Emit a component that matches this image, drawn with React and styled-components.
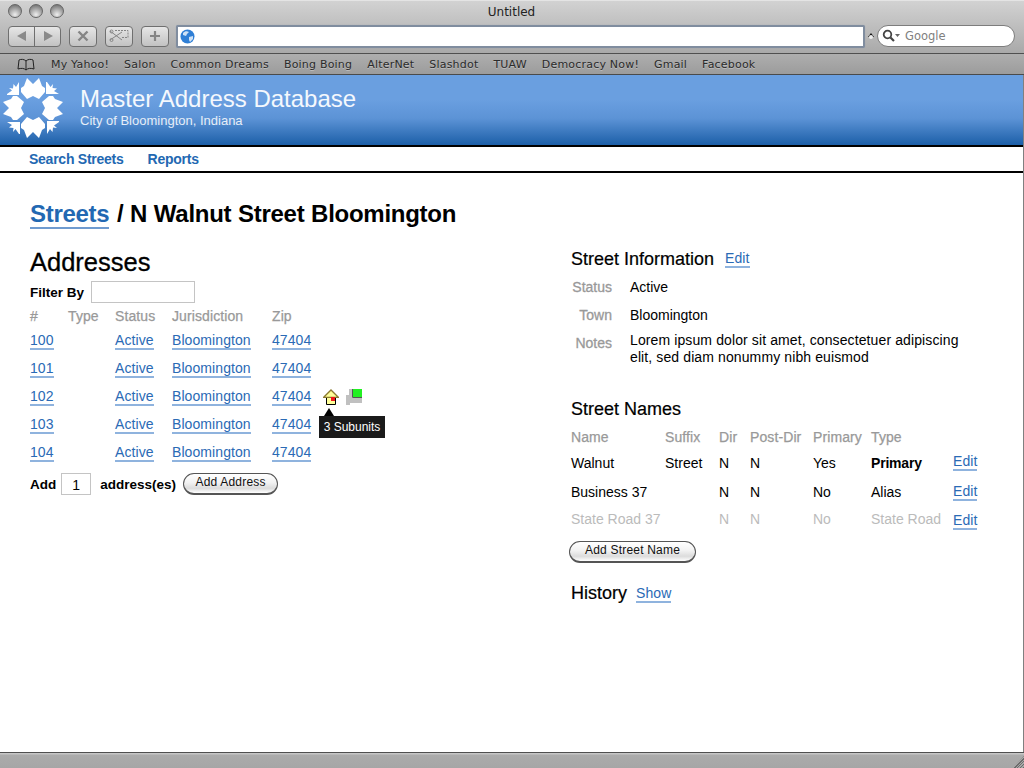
import React from 'react'
import styled, { createGlobalStyle } from 'styled-components'

const Global = createGlobalStyle`
html, body { margin: 0; padding: 0; background: #fff; }
body { font-family: "Liberation Sans", Arial, sans-serif; font-size: 14px; color: #000; }
* { box-sizing: border-box; }
`

const Page = styled.div`
width: 1024px;
height: 768px;
display: flex;
flex-direction: column;
overflow: hidden;
`

const Toolbar = styled.div`
height: 54px;
flex: none;
background: linear-gradient(#d2d2d2, #a9a9a9);
border-top: 1px solid #e4e4e4;
border-bottom: 1px solid #4f4f4f;
padding: 3px 9px 0 8px;
display: flex;
flex-direction: column;
`

const TitleRow = styled.div`
height: 17px;
padding-bottom: 2px;
display: flex;
align-items: center;
position: relative;
justify-content: center;
font-family: "DejaVu Sans", sans-serif;
font-size: 12px;
color: #222;
`

const Lights = styled.div`
position: absolute;
left: 0;
top: 0;
display: flex;
gap: 7px;
`

const Light = styled.span`
width: 14px;
height: 14px;
border-radius: 50%;
border: 1px solid #666;
background: radial-gradient(circle at 50% 80%, #eeeeee 0, #a8a8a8 50%, #707070 90%);
`

const Controls = styled.div`
display: flex;
align-items: center;
margin-top: 3px;
height: 24px;
`

const NavGroup = styled.div`
display: flex;
width: ${p => p.$w}px;
height: 21px;
margin-right: ${p => p.$mr}px;
border: 1px solid #6f6f6f;
border-radius: 4px;
background: linear-gradient(#e6e6e6, #c2c2c2);
`

const NavButton = styled.div`
flex: 1;
display: flex;
align-items: center;
justify-content: center;
& + & { border-left: 1px solid #6f6f6f; }
`

const UrlField = styled.div`
width: 689px;
height: 23px;
background: #fff;
border: 2px solid #808d9f;
box-shadow: 0 0 1px #8d9bb0;
border-radius: 2px;
display: flex;
align-items: center;
padding-left: 2px;
`

const Caret = styled.div`
width: 12px;
display: flex;
justify-content: center;
`

const SearchField = styled.div`
width: 138px;
height: 22px;
border-radius: 11px;
background: #fff;
border: 1px solid #7d7d7d;
display: flex;
align-items: center;
padding-left: 4px;
gap: 3px;
font-family: "DejaVu Sans", sans-serif;
font-size: 11.5px;
color: #808080;
`

const BookmarkBar = styled.div`
height: 21px;
flex: none;
background: linear-gradient(#aeaeae, #9c9c9c);
border-bottom: 1px solid #4a4a4a;
display: flex;
align-items: center;
padding-left: 17px;
font-family: "DejaVu Sans", sans-serif;
font-size: 11px;
color: #2b2b2b;
text-shadow: 0 1px 0 #bdbdbd;
`

const BookIcon = styled.svg`
margin-right: 16px;
`

const Bookmark = styled.span`
margin-right: 15px;
letter-spacing: 0.2px;
`

const Viewport = styled.div`
flex: 1;
display: flex;
flex-direction: column;
border-right: 1px solid #808080;
`

const Masthead = styled.div`
height: 70px;
flex: none;
background: linear-gradient(#6a9fe0 0, #6a9fe0 35%, #5c93d6 62%, #1c5fa8 100%);
display: flex;
padding: 3px 0 0 3px;
color: #fff;
`

const Titles = styled.div`
margin-left: 17px;
padding-top: 7px;
`

const AppName = styled.div`
font-size: 24px;
line-height: 28px;
color: #f4f8fd;
`

const AppPlace = styled.div`
font-size: 13px;
line-height: 15px;
color: #e6eef8;
`

const MainNav = styled.div`
height: 28px;
flex: none;
border-top: 2px solid #000;
border-bottom: 2px solid #000;
display: flex;
align-items: center;
padding-left: 29px;
gap: 24px;
`

const NavLink = styled.a`
font-size: 14px;
font-weight: bold;
color: #2268b2;
letter-spacing: -0.25px;
`

const Content = styled.div`
flex: 1;
padding: 26px 30px 0 30px;
`

const Heading = styled.h1`
margin: 0;
font-size: 24px;
line-height: 30px;
font-weight: bold;
letter-spacing: -0.27px;
word-spacing: 0.3px;
`

const HeadingLink = styled.a`
color: #2268b2;
letter-spacing: -0.3px;
border-bottom: 2px solid #6f9bd0;
margin-right: 1px;
`

const Columns = styled.div`
display: grid;
grid-template-columns: 541px 1fr;
margin-top: 17px;
`

const SectionTitle = styled.h2`
margin: 0;
font-size: 25.5px;
line-height: 32px;
font-weight: normal;
-webkit-text-stroke: 0.3px #000;
`

const FilterRow = styled.div`
display: flex;
align-items: center;
height: 24px;
margin-top: 2px;
font-weight: bold;
font-size: 13.5px;
gap: 7px;
`

const TextBox = styled.div`
width: ${p => p.$w}px;
height: 22px;
margin: 0 ${p => p.$mr || 0}px 0 ${p => p.$ml || 0}px;
border: 1px solid #c4c4c4;
background: #fff;
font-size: 14px;
text-align: center;
line-height: 22px;
font-weight: normal;
`

const AddressHead = styled.div`
display: grid;
grid-template-columns: 38px 47px 57px 100px 51px;
height: 23px;
align-items: center;
`

const HeadCell = styled.span`
color: #999;
font-size: 14px;
letter-spacing: 0.1px;
-webkit-text-stroke: 0.25px #999;
`

const AddressRow = styled.div`
display: grid;
grid-template-columns: 38px 47px 57px 100px 51px auto;
height: 28px;
align-items: center;
position: relative;
`

const Link = styled.a`
color: #2a6ab5;
font-size: 14px;
letter-spacing: 0.08px;
border-bottom: 2px solid #8fb3de;
justify-self: start;
line-height: 15px;
`

const EditLink = styled(Link)`
margin-top: ${p => (p.$drop ? 2 : 0)}px;
`

const RowIcons = styled.div`
display: flex;
gap: 7px;
padding-top: 1px;
`

const Tip = styled.div`
position: absolute;
left: 289px;
top: 33px;
height: 22px;
width: 66px;
background: #1a1a1a;
color: #fff;
font-size: 12px;
line-height: 22px;
text-align: center;
z-index: 2;
&::before {
  content: '';
  position: absolute;
  left: 5px;
  top: -8px;
  border-left: 5px solid transparent;
  border-right: 5px solid transparent;
  border-bottom: 8px solid #000;
}
`

const AddRow = styled.div`
display: flex;
align-items: center;
font-weight: bold;
font-size: 13.5px;
margin-top: 5px;
height: 24px;
`

const PillButton = styled.div`
height: 22px;
width: ${p => p.$w}px;
margin: ${p => p.$mt || 0}px 0 0 ${p => p.$ml || 0}px;
border-radius: 11px;
border: 1px solid #555;
border-bottom-width: 2px;
background: linear-gradient(#fff 0, #f2f2f2 45%, #dcdcdc 75%, #fff 100%);
font-size: 12px;
letter-spacing: 0.2px;
font-weight: normal;
text-align: center;
line-height: 17px;
color: #111;
`

const RightColumn = styled.div`
padding-top: 1px;
`

const SubHead = styled.div`
display: flex;
align-items: center;
gap: 11px;
margin-top: ${p => p.$mt || 0}px;
`

const SubTitle = styled.h3`
margin: 0;
font-size: 18px;
line-height: 24px;
font-weight: normal;
-webkit-text-stroke: 0.2px #000;
`

const HistoryLink = styled(Link)`
margin: 2px 0 0 -2px;
`

const InfoRow = styled.div`
display: grid;
grid-template-columns: 41px 1fr;
column-gap: 18px;
margin-top: ${p => p.$mt}px;
line-height: 17px;
`

const InfoLabel = styled.span`
color: #999;
text-align: right;
-webkit-text-stroke: 0.3px #999;
padding-top: ${p => p.$drop || 0}px;
`

const NotesText = styled.span`
letter-spacing: 0.11px;
`

const nameColumns = '94px 54px 31px 63px 58px 82px 30px'

const NameHead = styled.div`
display: grid;
grid-template-columns: ${nameColumns};
height: 22px;
margin-top: 5px;
align-items: center;
`

const NameRow = styled.div`
display: grid;
grid-template-columns: ${nameColumns};
height: 29px;
align-items: center;
color: ${p => (p.$muted ? '#bbb' : '#000')};
`

const NameCell = styled.span`
padding-bottom: ${p => (p.$muted ? 3 : 0)}px;
`

const TypeCell = styled(NameCell)`
font-weight: ${p => (p.$bold ? 'bold' : 'normal')};
letter-spacing: ${p => (p.$bold ? '-0.2px' : '0')};
`

const StatusStrip = styled.div`
height: 16px;
flex: none;
border-top: 1px solid #4f4f4f;
background: linear-gradient(#c6c6c6 0, #c6c6c6 1px, #ababab 2px, #a6a6a6 100%);
display: flex;
justify-content: flex-end;
align-items: flex-end;
`

const Grip = styled.div`
width: 11px;
height: 12px;
background: repeating-linear-gradient(135deg, transparent 0 1px, #6c6c6c 1px 2px);
clip-path: polygon(100% 0, 100% 100%, 0 100%);
`

function Logo() {
  const arrow = '18,10 21,8 24,0 30,6 36,0 39,8 42,10 42,14 36,21 30,18 24,21 18,14'
  const corner = '16,17 16,4 13,9 10.5,6 10,10.5 6,10 9,12.5 4,16 4,17'
  return (
    <svg width="60" height="60" viewBox="0 0 60 60">
      {[0, 90, 180, 270].map(a => (
        <g key={a} transform={`rotate(${a} 30 30)`} fill="#fff">
          <polygon points={arrow} />
          <polygon points={corner} />
        </g>
      ))}
    </svg>
  )
}

function Globe() {
  return (
    <svg width="15" height="15" viewBox="0 0 15 15">
      <circle cx="7.5" cy="7.5" r="7" fill="#2f7fd6" />
      <path d="M3 4c2-2 4-2 6-1l-2 2-1 2-3-1zM9 8l4-1 0 3-3 3-1-2z" fill="#cfe2f6" />
    </svg>
  )
}

function House() {
  return (
    <svg width="16" height="17" viewBox="0 0 16 17">
      <path d="M3.5 8v7.5h9V8" fill="#ffff99" stroke="#000" />
      <path d="M.7 8.3 8 1l7.3 7.3z" fill="#ffff99" stroke="#8a7a30" strokeWidth="1.3" />
      <rect x="8" y="8" width="4" height="4" fill="#f01818" />
    </svg>
  )
}

function Subunit() {
  return (
    <svg width="16" height="16" viewBox="0 0 16 16">
      <path d="M3 0h3v9h10v5H4v2H0V6h3z" fill="#c0c0c0" />
      <path d="M6.5 0v8.5H16" fill="none" stroke="#555" />
      <rect x="7" y="0" width="9" height="8" fill="#22f022" />
    </svg>
  )
}

const addresses = ['100', '101', '102', '103', '104']

const names = [
  { name: 'Walnut', suffix: 'Street', primary: 'Yes', type: 'Primary', bold: true },
  { name: 'Business 37', suffix: '', primary: 'No', type: 'Alias', drop: true },
  { name: 'State Road 37', suffix: '', primary: 'No', type: 'State Road', muted: true, drop: true }
]

export default function App() {
  return (
    <Page>
      <Global />
      <Toolbar>
        <TitleRow>
          <Lights>
            <Light /><Light /><Light />
          </Lights>
          Untitled
        </TitleRow>
        <Controls>
          <NavGroup $w={53} $mr={8}>
            <NavButton>
              <svg width="10" height="10" viewBox="0 0 10 10"><path d="M9 0v10L0 5z" fill="#8a8a8a" /></svg>
            </NavButton>
            <NavButton>
              <svg width="10" height="10" viewBox="0 0 10 10"><path d="M1 0v10l9-5z" fill="#8a8a8a" /></svg>
            </NavButton>
          </NavGroup>
          <NavGroup $w={28} $mr={8}>
            <NavButton>
              <svg width="12" height="12" viewBox="0 0 12 12"><path d="M1.5 1.5l9 9M10.5 1.5l-9 9" stroke="#858585" strokeWidth="2.4" /></svg>
            </NavButton>
          </NavGroup>
          <NavGroup $w={28} $mr={8}>
            <NavButton>
              <svg width="20" height="14" viewBox="0 0 20 14" fill="none" stroke="#858585">
                <path d="M6 1.5h13v7h-6" strokeDasharray="2 1" />
                <path d="M1 2l12 9M1 11l12-8" />
                <circle cx="2.5" cy="2.5" r="1.5" />
                <circle cx="2.5" cy="11" r="1.5" />
              </svg>
            </NavButton>
          </NavGroup>
          <NavGroup $w={28} $mr={7}>
            <NavButton>
              <svg width="12" height="12" viewBox="0 0 12 12"><path d="M6 1v10M1 6h10" stroke="#858585" strokeWidth="2.2" /></svg>
            </NavButton>
          </NavGroup>
          <UrlField><Globe /></UrlField>
          <Caret>
            <svg width="6" height="6" viewBox="0 0 6 6"><path d="M3 0l3 4H0z" fill="#111" /><circle cx="3" cy="4" r="2" fill="#eee" /></svg>
          </Caret>
          <SearchField>
            <svg width="20" height="14" viewBox="0 0 20 14" fill="none">
              <circle cx="5.5" cy="5.5" r="3.8" stroke="#444" strokeWidth="1.8" />
              <path d="M8.5 8.5l3.5 3.5" stroke="#444" strokeWidth="2.2" />
              <path d="M13 5h5l-2.5 3z" fill="#666" />
            </svg>
            Google
          </SearchField>
        </Controls>
      </Toolbar>
      <BookmarkBar>
        <BookIcon width="18" height="13" viewBox="0 0 18 13" fill="none" stroke="#222">
          <path d="M9 3C7 1 4 1 2 2L1 11c3-1 6-1 8 1 2-2 5-2 8-1l-1-9c-2-1-5-1-7 1zM9 3v9" />
        </BookIcon>
        {['My Yahoo!', 'Salon', 'Common Dreams', 'Boing Boing', 'AlterNet', 'Slashdot', 'TUAW', 'Democracy Now!', 'Gmail', 'Facebook'].map(b => (
          <Bookmark key={b}>{b}</Bookmark>
        ))}
      </BookmarkBar>
      <Viewport>
        <Masthead>
          <Logo />
          <Titles>
            <AppName>Master Address Database</AppName>
            <AppPlace>City of Bloomington, Indiana</AppPlace>
          </Titles>
        </Masthead>
        <MainNav>
          <NavLink>Search Streets</NavLink>
          <NavLink>Reports</NavLink>
        </MainNav>
        <Content>
          <Heading><HeadingLink>Streets</HeadingLink> / N Walnut Street Bloomington</Heading>
          <Columns>
            <div>
              <SectionTitle>Addresses</SectionTitle>
              <FilterRow>Filter By <TextBox $w={104} /></FilterRow>
              <AddressHead>
                <HeadCell>#</HeadCell>
                <HeadCell>Type</HeadCell>
                <HeadCell>Status</HeadCell>
                <HeadCell>Jurisdiction</HeadCell>
                <HeadCell>Zip</HeadCell>
              </AddressHead>
              {addresses.map(num => (
                <AddressRow key={num}>
                  <Link>{num}</Link>
                  <span />
                  <Link>Active</Link>
                  <Link>Bloomington</Link>
                  <Link>47404</Link>
                  {num === '102' && (
                    <RowIcons>
                      <House />
                      <Subunit />
                    </RowIcons>
                  )}
                  {num === '102' && <Tip>3 Subunits</Tip>}
                </AddressRow>
              ))}
              <AddRow>
                Add
                <TextBox $w={30} $ml={5} $mr={9}>1</TextBox>
                address(es)
                <PillButton $w={95} $ml={7}>Add Address</PillButton>
              </AddRow>
            </div>
            <RightColumn>
              <SubHead>
                <SubTitle>Street Information</SubTitle>
                <Link>Edit</Link>
              </SubHead>
              <InfoRow $mt={8}><InfoLabel>Status</InfoLabel><span>Active</span></InfoRow>
              <InfoRow $mt={11}><InfoLabel>Town</InfoLabel><span>Bloomington</span></InfoRow>
              <InfoRow $mt={8}>
                <InfoLabel $drop={3}>Notes</InfoLabel>
                <NotesText>Lorem ipsum dolor sit amet, consectetuer adipiscing<br />elit, sed diam nonummy nibh euismod</NotesText>
              </InfoRow>
              <SubHead $mt={31}>
                <SubTitle>Street Names</SubTitle>
              </SubHead>
              <NameHead>
                <HeadCell>Name</HeadCell>
                <HeadCell>Suffix</HeadCell>
                <HeadCell>Dir</HeadCell>
                <HeadCell>Post-Dir</HeadCell>
                <HeadCell>Primary</HeadCell>
                <HeadCell>Type</HeadCell>
                <span />
              </NameHead>
              {names.map(n => (
                <NameRow key={n.name} $muted={n.muted}>
                  <NameCell $muted={n.muted}>{n.name}</NameCell>
                  <NameCell $muted={n.muted}>{n.suffix}</NameCell>
                  <NameCell $muted={n.muted}>N</NameCell>
                  <NameCell $muted={n.muted}>N</NameCell>
                  <NameCell $muted={n.muted}>{n.primary}</NameCell>
                  <TypeCell $muted={n.muted} $bold={n.bold}>{n.type}</TypeCell>
                  <EditLink $drop={n.drop}>Edit</EditLink>
                </NameRow>
              ))}
              <PillButton $w={127} $mt={6} $ml={-2}>Add Street Name</PillButton>
              <SubHead $mt={18}>
                <SubTitle>History</SubTitle>
                <HistoryLink>Show</HistoryLink>
              </SubHead>
            </RightColumn>
          </Columns>
        </Content>
      </Viewport>
      <StatusStrip><Grip /></StatusStrip>
    </Page>
  )
}
